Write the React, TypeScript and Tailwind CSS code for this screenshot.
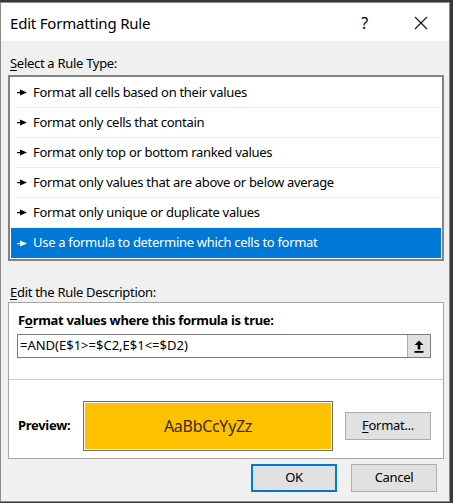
import React from 'react'

const rules = [
  'Format all cells based on their values',
  'Format only cells that contain',
  'Format only top or bottom ranked values',
  'Format only values that are above or below average',
  'Format only unique or duplicate values',
  'Use a formula to determine which cells to format',
]

function Pointer({ color }: { color: string }) {
  return (
    <svg width="10" height="7" viewBox="0 0 10 7" className="shrink-0">
      <rect x="0" y="3" width="4" height="1.2" fill={color} />
      <path d="M3 0.5 L10 3.5 L3 6.5 Z" fill={color} />
    </svg>
  )
}

export default function App() {
  const selected = 5

  return (
    <div
      className="w-[453px] h-[503px] bg-[#3a3a33] text-black text-[13px] tracking-[-0.3px] overflow-hidden"
      style={{ fontFamily: '"Noto Sans", "Open Sans", sans-serif' }}
    >
      <div className="w-[450px] h-[500px] mt-[2px] bg-[#f0f0f0] border border-[#8a8a8a] flex flex-col">
        {/* title bar */}
        <div className="h-[38px] bg-white flex items-center shrink-0">
          <span className="ml-[9px] mt-[2px] text-[15px] tracking-[-0.2px] leading-none">Edit Formatting Rule</span>
          <span className="ml-auto mt-[2px] text-[16px] leading-none mr-[46px]">?</span>
          <svg width="14" height="14" viewBox="0 0 14 14" className="mr-[21px] mt-[2px]">
            <path d="M1 1 L13 13 M13 1 L1 13" stroke="#111" strokeWidth="1.1" />
          </svg>
        </div>

        <div className="mt-[12px] ml-[9px] h-[20px] leading-[20px]">
          <span className="underline underline-offset-2">S</span>elect a Rule Type:
        </div>

        {/* rule type list */}
        <div className="mt-[2px] ml-[7px] w-[436px] h-[186px] bg-white border-2 border-[#838383] pt-[1px] px-[1px]">
          {rules.map((r, i) => (
            <React.Fragment key={r}>
              {i > 0 && <div className="h-px ml-[5px] mr-[1px] bg-[#ececec]" />}
              <div
                className={
                  i === selected
                    ? 'h-[30px] flex items-center gap-[6px] pl-[6px] bg-[#0078d7] text-white'
                    : 'h-[29px] flex items-center gap-[6px] pl-[6px]'
                }
              >
                <Pointer color={i === selected ? '#ffffff' : '#000000'} />
                <span>{r}</span>
              </div>
            </React.Fragment>
          ))}
        </div>

        <div className="mt-[21px] ml-[9px] h-[20px] leading-[20px]">
          <span className="underline underline-offset-2">E</span>dit the Rule Description:
        </div>

        {/* description box */}
        <div className="ml-[7px] w-[436px] h-[157px] bg-white border border-[#a5a5a5] flex flex-col">
          <div className="pt-[7px] pl-[9px] h-[27px] leading-[20px] font-bold">
            F<span className="underline underline-offset-2">o</span>rmat values where this formula is true:
          </div>
          <div className="mt-[4px] ml-[8px] w-[414px] h-[24px] border border-[#7a7a7a] flex">
            <div className="flex-1 pl-[2px] flex items-center tracking-normal">=AND(E$1&gt;=$C2,E$1&lt;=$D2)</div>
            <div className="w-[23px] h-full bg-[#e1e1e1] border-l border-[#adadad] flex items-center justify-center">
              <svg width="10" height="13" viewBox="0 0 10 13">
                <path d="M5 0.5 L9.5 5 L6.3 5 L6.3 9.5 L3.7 9.5 L3.7 5 L0.5 5 Z" fill="#000" />
                <rect x="0.5" y="11" width="9" height="1.8" fill="#000" />
              </svg>
            </div>
          </div>
          <div className="mt-[21px] h-px bg-[#cdcdcd]" />
          <div className="mt-[21px] flex items-center">
            <div className="pl-[9px] w-[74px] font-bold">Preview:</div>
            <div className="w-[250px] h-[50px] border border-[#6e6e6e] p-px bg-white">
              <div className="w-full h-full bg-[#ffc000] flex items-center justify-center text-[16px] text-[#3b2b00]">
                AaBbCcYyZz
              </div>
            </div>
            <button className="ml-[12px] w-[86px] h-[28px] bg-[#e1e1e1] border border-[#adadad] flex items-center justify-center">
              <span className="underline underline-offset-2">F</span>ormat...
            </button>
          </div>
        </div>

        {/* footer buttons */}
        <div className="mt-[5px] flex justify-end gap-[14px] pr-[12px]">
          <button className="w-[86px] h-[28px] bg-[#e1e1e1] border-2 border-[#0078d7]">OK</button>
          <button className="w-[86px] h-[28px] bg-[#e1e1e1] border border-[#adadad]">Cancel</button>
        </div>
      </div>
    </div>
  )
}
